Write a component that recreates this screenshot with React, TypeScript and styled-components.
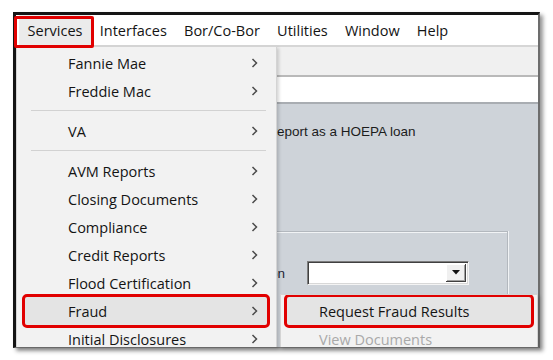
import React from 'react';
import styled, { createGlobalStyle } from 'styled-components';

const GlobalStyle = createGlobalStyle`
  html, body { margin: 0; padding: 0; background: #fff; }
  body { width: 553px; height: 360px; overflow: hidden; font-family: "Open Sans", "Noto Sans", sans-serif; }
  #root { width: 553px; height: 360px; }
`;

const Page = styled.div`
  width: 553px;
  height: 360px;
  box-sizing: border-box;
  padding: 12px 0 0 13px;
  background: #fff;
`;

const Window = styled.div`
  position: relative;
  width: 527px;
  height: 336px;
  box-sizing: border-box;
  border-top: 3px solid #151515;
  border-left: 3px solid #151515;
  border-right: 2px solid #6d6d6d;
  border-bottom: 1px solid #7a7a7a;
  box-shadow: 3px 3px 4px rgba(0, 0, 0, 0.42);
  display: flex;
  flex-direction: column;
  background: #ced3d9;
`;

const MenuBar = styled.div`
  height: 30px;
  flex: none;
  display: flex;
  align-items: stretch;
  padding-left: 3px;
  background: #fff;
  border-bottom: 2px solid #d6d6d6;
  font-size: 14.5px;
  color: #141414;
`;

const MenuBarItem = styled.div<{ $active?: boolean }>`
  position: relative;
  display: flex;
  align-items: center;
  padding: 0 8.6px;
  white-space: nowrap;
  background: ${(p) => (p.$active ? '#ebebeb' : 'transparent')};
  z-index: ${(p) => (p.$active ? 5 : 'auto')};
  &::after {
    content: '';
    display: ${(p) => (p.$active ? 'block' : 'none')};
    position: absolute;
    left: -5px;
    right: -3px;
    top: 1px;
    bottom: -3px;
    border: 3px solid #e10000;
    border-radius: 2px;
  }
`;

const Toolbar = styled.div`
  height: 28px;
  flex: none;
  background: #f0f0f0;
  border-bottom: 2px solid #b9b9b9;
`;

const AddressStrip = styled.div`
  height: 25px;
  flex: none;
  background: #fff;
  border-bottom: 2px solid #a9adb2;
`;

const ContentArea = styled.div`
  flex: 1;
  overflow: hidden;
  background: #ced3d9;
  font-family: "Liberation Sans", Arial, sans-serif;
  font-size: 13.5px;
  color: #1c1c1c;
`;

const HoepaRow = styled.div`
  margin-top: 20px;
  height: 16px;
  line-height: 16px;
  padding-left: 213px;
  white-space: nowrap;
`;

const GroupBox = styled.div`
  margin: 91px 0 0 164px;
  width: 328px;
  height: 200px;
  box-sizing: border-box;
  border: 1px solid #b3b8be;
  border-bottom: none;
  box-shadow: inset 1px 1px 0 #f1f3f5, 1px 0 0 #f1f3f5;
`;

const GroupRow = styled.div`
  margin-top: 29px;
  display: flex;
  align-items: center;
  gap: 22px;
`;

const FieldLabel = styled.div`
  width: 104px;
  display: flex;
  justify-content: flex-end;
  white-space: nowrap;
  color: #1d2433;
`;

const Combo = styled.div`
  width: 162px;
  height: 24px;
  box-sizing: border-box;
  display: flex;
  justify-content: flex-end;
  padding: 2px;
  background: #fff;
  border-top: 1px solid #7d7d7d;
  border-left: 1px solid #7d7d7d;
  border-right: 1px solid #f4f4f4;
  border-bottom: 1px solid #f4f4f4;
  box-shadow: inset 1px 1px 0 #404040, inset -1px -1px 0 #d8d8d8;
`;

const ComboButton = styled.div`
  width: 20px;
  box-sizing: border-box;
  display: flex;
  align-items: center;
  justify-content: center;
  background: #f0f0f0;
  border-right: 1px solid #404040;
  border-bottom: 1px solid #404040;
  box-shadow: inset 1px 1px 0 #fff, inset -1px -1px 0 #a0a0a0;
`;

const DropMenu = styled.div`
  position: absolute;
  left: 0;
  top: 31px;
  width: 261px;
  height: 301px;
  box-sizing: border-box;
  overflow: hidden;
  padding-top: 2px;
  background: #f2f2f2;
  border: 1px solid #d4d4d4;
  border-bottom: none;
  box-shadow: 2px 2px 3px rgba(0, 0, 0, 0.16);
  font-size: 14.5px;
  color: #141414;
  z-index: 3;
`;

const SubMenu = styled(DropMenu)`
  left: 264px;
  top: 279px;
  width: 258px;
  height: 53px;
  z-index: 4;
`;

const MenuItem = styled.div<{ $active?: boolean; $disabled?: boolean; $indent: number; $left: number; $right: number }>`
  height: 28px;
  margin: 0 ${(p) => p.$right}px 0 ${(p) => p.$left}px;
  padding: 0 9px 0 ${(p) => p.$indent}px;
  display: flex;
  align-items: center;
  justify-content: space-between;
  white-space: nowrap;
  border-radius: 2px;
  color: ${(p) => (p.$disabled ? '#a9a9a9' : '#141414')};
  background: ${(p) => (p.$active ? '#e4e4e4' : 'transparent')};
  outline: ${(p) => (p.$active ? '3px solid #e10000' : 'none')};
`;

const Separator = styled.div`
  height: 1px;
  margin: 5px 10px 6px 14px;
  background: #d2d2d2;
`;

const Chevron = () => (
  <svg width="7" height="10" viewBox="0 0 7 10">
    <polyline points="1.5,1 5.5,5 1.5,9" fill="none" stroke="#4a4a4a" strokeWidth="1.5" />
  </svg>
);

const DownTriangle = () => (
  <svg width="8" height="5" viewBox="0 0 8 5">
    <polygon points="0,0 8,0 4,4.5" fill="#111" />
  </svg>
);

type Entry = { label: string; active?: boolean } | 'sep';

const menuEntries: Entry[] = [
  { label: 'Fannie Mae' },
  { label: 'Freddie Mac' },
  'sep',
  { label: 'VA' },
  'sep',
  { label: 'AVM Reports' },
  { label: 'Closing Documents' },
  { label: 'Compliance' },
  { label: 'Credit Reports' },
  { label: 'Flood Certification' },
  { label: 'Fraud', active: true },
  { label: 'Initial Disclosures' },
];

const barItems = ['Services', 'Interfaces', 'Bor/Co-Bor', 'Utilities', 'Window', 'Help'];

export default function App() {
  return (
    <>
      <GlobalStyle />
      <Page>
        <Window>
          <MenuBar>
            {barItems.map((b, i) => (
              <MenuBarItem key={b} $active={i === 0}>
                {b}
              </MenuBarItem>
            ))}
          </MenuBar>
          <Toolbar />
          <AddressStrip />
          <ContentArea>
            <HoepaRow>Do not report as a HOEPA loan</HoepaRow>
            <GroupBox>
              <GroupRow>
                <FieldLabel>Vendor Selection</FieldLabel>
                <Combo>
                  <ComboButton>
                    <DownTriangle />
                  </ComboButton>
                </Combo>
              </GroupRow>
            </GroupBox>
          </ContentArea>

          <DropMenu>
            {menuEntries.map((e, i) =>
              e === 'sep' ? (
                <Separator key={i} />
              ) : (
                <MenuItem key={i} $active={e.active} $indent={43} $left={8} $right={9}>
                  <span>{e.label}</span>
                  <Chevron />
                </MenuItem>
              )
            )}
          </DropMenu>

          <SubMenu>
            <MenuItem $active $indent={32} $left={6} $right={6}>
              <span>Request Fraud Results</span>
            </MenuItem>
            <MenuItem $disabled $indent={32} $left={6} $right={6}>
              <span>View Documents</span>
            </MenuItem>
          </SubMenu>
        </Window>
      </Page>
    </>
  );
}
